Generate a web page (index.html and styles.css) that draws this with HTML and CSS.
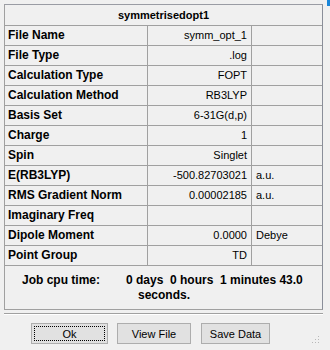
FILE: index.html
```html
<!DOCTYPE html>
<html>
<head>
<meta charset="utf-8">
<link rel="stylesheet" href="styles.css">
</head>
<body>
<div class="win">
  <div class="frame">
    <div class="title">symmetrisedopt1</div>
    <div class="row"><div class="lbl">File Name</div><div class="val">symm_opt_1</div><div class="unit"></div></div>
    <div class="row"><div class="lbl">File Type</div><div class="val">.log</div><div class="unit"></div></div>
    <div class="row"><div class="lbl">Calculation Type</div><div class="val">FOPT</div><div class="unit"></div></div>
    <div class="row"><div class="lbl">Calculation Method</div><div class="val">RB3LYP</div><div class="unit"></div></div>
    <div class="row"><div class="lbl">Basis Set</div><div class="val">6-31G(d,p)</div><div class="unit"></div></div>
    <div class="row"><div class="lbl">Charge</div><div class="val">1</div><div class="unit"></div></div>
    <div class="row"><div class="lbl">Spin</div><div class="val">Singlet</div><div class="unit"></div></div>
    <div class="row"><div class="lbl">E(RB3LYP)</div><div class="val">-500.82703021</div><div class="unit">a.u.</div></div>
    <div class="row"><div class="lbl">RMS Gradient Norm</div><div class="val">0.00002185</div><div class="unit">a.u.</div></div>
    <div class="row"><div class="lbl">Imaginary Freq</div><div class="val"></div><div class="unit"></div></div>
    <div class="row"><div class="lbl">Dipole Moment</div><div class="val">0.0000</div><div class="unit">Debye</div></div>
    <div class="row"><div class="lbl">Point Group</div><div class="val">TD</div><div class="unit"></div></div>
    <div class="cpu">
      <div class="cpu-lbl">Job cpu time:</div>
      <div class="cpu-val">
        <div class="l1">0 days&nbsp; 0 hours&nbsp; 1 minutes 43.0</div>
        <div class="l2">seconds.</div>
      </div>
    </div>
  </div>
  <div class="sep"></div>
  <div class="buttons">
    <button class="btn btn-ok"><span class="focus">Ok</span></button>
    <button class="btn btn-view">View File</button>
    <button class="btn btn-save">Save Data</button>
  </div>
  <svg class="grip" width="8" height="8" viewBox="0 0 8 8">
    <rect x="6" y="0" width="1" height="1" fill="#b8b8b8"/>
    <rect x="3" y="3" width="1" height="1" fill="#b8b8b8"/>
    <rect x="6" y="3" width="1" height="1" fill="#b8b8b8"/>
    <rect x="0" y="6" width="1" height="1" fill="#b8b8b8"/>
    <rect x="3" y="6" width="1" height="1" fill="#b8b8b8"/>
    <rect x="6" y="6" width="1" height="1" fill="#b8b8b8"/>
  </svg>
  <div class="edge"></div>
</div>
</body>
</html>
```
FILE: styles.css
```css
* { box-sizing: border-box; }
html, body {
  margin: 0;
  padding: 0;
  background: #f0f0f0;
}
body {
  width: 330px;
  height: 350px;
  overflow: hidden;
  font-family: "Liberation Sans", Arial, sans-serif;
  color: #000;
}
.win {
  position: relative;
  width: 330px;
  height: 350px;
  padding: 4px 0 0 4px;
}
.frame {
  width: 319px;
  border: 1px solid #a0a0a0;
  border-right-color: #8a8e99;
  border-top-color: #9a9ca4;
}
.title {
  height: 21px;
  line-height: 20px;
  border-bottom: 1px solid #a0a0a0;
  text-align: center;
  font-weight: bold;
  font-size: 11px;
}
.row {
  display: grid;
  grid-template-columns: 143px 104px 70px;
  height: 20px;
  border-bottom: 1px solid #a0a0a0;
}
.row > div {
  line-height: 19px;
  white-space: nowrap;
  overflow: hidden;
}
.lbl {
  border-right: 1px solid #a0a0a0;
  font-weight: bold;
  font-size: 12px;
  padding-left: 3px;
}
.val {
  border-right: 1px solid #a0a0a0;
  font-size: 11px;
  text-align: right;
  padding-right: 4px;
}
.unit {
  font-size: 11px;
  padding-left: 4px;
}
.cpu {
  height: 43px;
  display: flex;
  padding: 7px 0 0 17px;
  font-weight: bold;
  font-size: 12px;
  line-height: 15px;
}
.cpu-lbl {
  width: 104px;
}
.cpu-val .l2 {
  padding-left: 12px;
}
.sep {
  width: 319px;
  margin-top: 3px;
  height: 2px;
  border-top: 1px solid #a0a0a0;
  border-bottom: 1px solid #ffffff;
}
.buttons {
  display: flex;
  padding: 8px 0 0 27px;
  gap: 9px;
}
.btn {
  height: 21px;
  padding: 0;
  margin: 0;
  background: #e1e1e1;
  border: 1px solid #adadad;
  font-family: "Liberation Sans", Arial, sans-serif;
  font-size: 11px;
  color: #000;
  display: flex;
  align-items: center;
  justify-content: center;
}
.btn-ok { width: 77px; border-color: #adadad; padding: 2px; }
.btn-view { width: 74px; }
.btn-save { width: 69px; margin-left: 1px; }
.focus {
  width: 100%;
  height: 100%;
  border: 1px dotted #000;
  display: flex;
  align-items: center;
  justify-content: center;
}
.grip {
  position: absolute;
  right: 10px;
  bottom: 6px;
}
.edge {
  position: absolute;
  top: 0;
  right: 0;
  width: 3px;
  height: 6px;
  background: #1a86d9;
}
```
